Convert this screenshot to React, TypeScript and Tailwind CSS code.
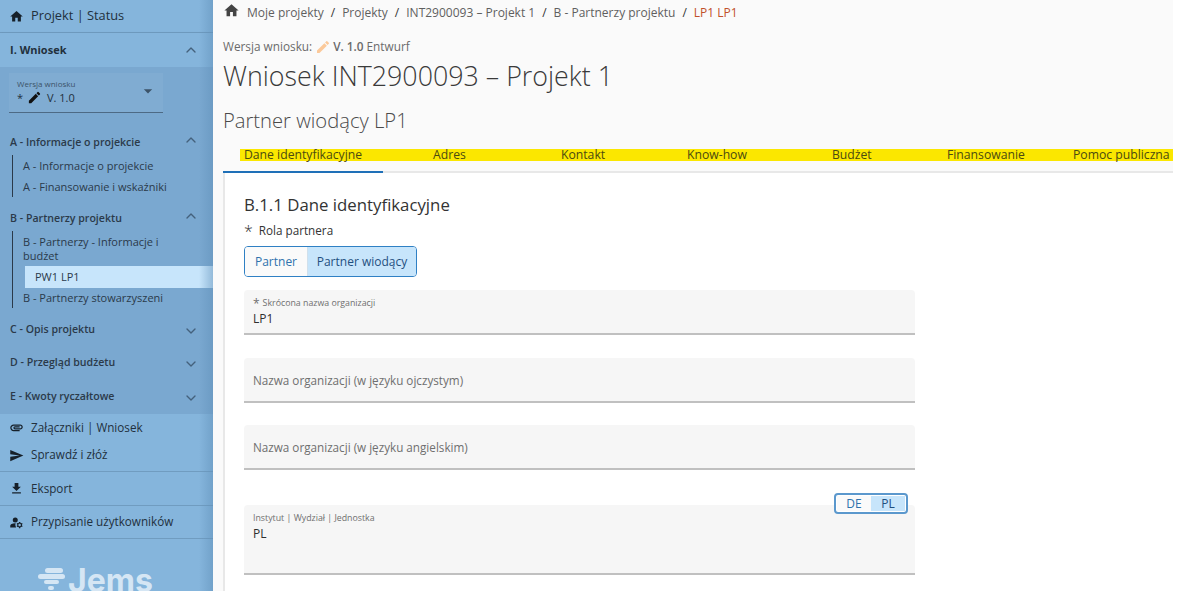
import { ChevronDown, ChevronUp } from 'lucide-react';
import {
  MdHome,
  MdEdit,
  MdArrowDropDown,
  MdAttachment,
  MdSend,
  MdFileDownload,
  MdManageAccounts,
} from 'react-icons/md';

const tabs = [
  { name: 'Dane identyfikacyjne', left: 'pl-[4px]', width: 'w-[193px]' },
  { name: 'Adres', left: 'pl-0', width: 'w-[128px]' },
  { name: 'Kontakt', left: 'pl-0', width: 'w-[126px]' },
  { name: 'Know-how', left: 'pl-0', width: 'w-[145px]' },
  { name: 'Budżet', left: 'pl-0', width: 'w-[115px]' },
  { name: 'Finansowanie', left: 'pl-0', width: 'w-[126px]' },
  { name: 'Pomoc publiczna', left: 'pl-0', width: 'w-[100px]' },
];

function NavGroup({
  title,
  open,
  children,
  className,
}: {
  title: string;
  open?: boolean;
  children?: React.ReactNode;
  className?: string;
}) {
  return (
    <div className={className}>
      <div className="flex h-[20px] items-center justify-between pl-[10px] pr-[14px]">
        <span className="pt-[2px] text-[10.6px] font-semibold text-[#2b3a4a]">{title}</span>
        {open ? (
          <ChevronUp className="-mt-[4px] h-[16px] w-[16px] text-[#44617c]" strokeWidth={2} />
        ) : (
          <ChevronDown className="mt-[4px] h-[16px] w-[16px] text-[#44617c]" strokeWidth={2} />
        )}
      </div>
      {children}
    </div>
  );
}

function BottomLink({
  icon,
  label,
  className,
}: {
  icon: React.ReactNode;
  label: string;
  className?: string;
}) {
  return (
    <div className={`flex shrink-0 items-center gap-[7px] pl-[9px] text-[#22303d] ${className}`}>
      <span className="flex w-[15px] justify-center text-[#16202a]">{icon}</span>
      {label}
    </div>
  );
}

function Field({
  label,
  value,
  required,
  className,
}: {
  label: string;
  value?: string;
  required?: boolean;
  className?: string;
}) {
  return (
    <div className={`w-[671px] rounded-t-[4px] border-b-2 border-[#c0c0c0] bg-[#f6f6f6] pl-[9px] ${className}`}>
      {value ? (
        <div className="pt-[8px]">
          <div className="flex h-[12px] items-center text-[8.8px] text-[#6f6f6f]">
            {required && <span className="mr-[3px] text-[12px] leading-none">*</span>}
            {label}
          </div>
          <div className="text-[12px] leading-[18px] text-[#2f2f2f]">{value}</div>
        </div>
      ) : (
        <div className="flex h-full items-center pt-[2px] text-[11.7px] text-[#6f6f6f]">{label}</div>
      )}
    </div>
  );
}

export default function App() {
  return (
    <div className="flex h-[591px] w-[1186px] overflow-hidden bg-white font-['Open_Sans',sans-serif]">
      {/* Sidebar */}
      <aside className="relative flex h-full w-[213px] shrink-0 flex-col overflow-hidden bg-[#85b5dc]">
        <div className="absolute inset-y-0 right-0 z-10 w-[14px] bg-gradient-to-r from-transparent to-[#5f8fb8]/50" />
        <BottomLink
          icon={<MdHome size={17} />}
          label="Projekt | Status"
          className="h-[33px] border-b border-[#709cc0] text-[12.8px]"
        />
        <div className="flex h-[34px] shrink-0 items-center justify-between pl-[10px] pr-[14px] shadow-[0_2px_3px_rgba(40,70,100,0.55)]">
          <span className="text-[11px] font-bold text-[#22303d]">I. Wniosek</span>
          <ChevronUp className="h-[16px] w-[16px] text-[#44617c]" strokeWidth={2} />
        </div>

        <div className="h-[347px] shrink-0 bg-[#7aa8d0] pt-[6px]">
          <div className="ml-[9px] flex h-[40px] w-[154px] justify-between border-b border-[#4d6a85] bg-[#80acd2] pl-[8px] pr-[5px]">
            <div>
              <div className="mt-[5px] text-[8px] leading-[12px] text-[#3c5368]">Wersja wniosku</div>
              <div className="flex items-center text-[11px] leading-[14px] text-[#22303d]">
                <span className="w-[10px]">*</span>
                <MdEdit size={15} className="text-[#111]" />
                <span className="ml-[5px]">V. 1.0</span>
              </div>
            </div>
            <MdArrowDropDown size={20} className="mt-[8px] text-[#3c5368]" />
          </div>

          <NavGroup title="A - Informacje o projekcie" open className="mt-[19px]">
            <div className="ml-[12px] mt-[3px] h-[42px] border-l border-[#2b3a4a] pl-[10px] text-[11px] leading-[21px] text-[#2b3a4a]">
              <div>A - Informacje o projekcie</div>
              <div>A - Finansowanie i wskaźniki</div>
            </div>
          </NavGroup>

          <NavGroup title="B - Partnerzy projektu" open className="mt-[11px]">
            <div className="ml-[12px] mt-[3px] border-l border-[#2b3a4a] text-[11px] text-[#2b3a4a]">
              <div className="w-[150px] pl-[10px] pt-[4px] leading-[14px]">B - Partnerzy - Informacje i budżet</div>
              <div className="ml-[12px] mt-[3px] h-[22px] bg-[#c7e5fb] pl-[10px] leading-[22px]">PW1 LP1</div>
              <div className="pl-[10px] leading-[20px]">B - Partnerzy stowarzyszeni</div>
            </div>
          </NavGroup>

          <NavGroup title="C - Opis projektu" className="mt-[11px]" />
          <NavGroup title="D - Przegląd budżetu" className="mt-[13px]" />
          <NavGroup title="E - Kwoty ryczałtowe" className="mt-[14px]" />
        </div>

        <BottomLink icon={<MdAttachment size={17} />} label="Załączniki | Wniosek" className="h-[27px] text-[11.7px]" />
        <BottomLink icon={<MdSend size={15} />} label="Sprawdź i złóż" className="h-[31px] border-b border-[#709cc0] pb-[2px] text-[11.7px]" />
        <BottomLink icon={<MdFileDownload size={17} />} label="Eksport" className="h-[34px] border-b border-[#709cc0] text-[11.7px]" />
        <BottomLink icon={<MdManageAccounts size={17} />} label="Przypisanie użytkowników" className="h-[33px] border-b border-[#709cc0] text-[11.7px]" />

        <div className="mt-[28px] flex shrink-0 items-start pl-[38px] text-[#d5e6f4]">
          <svg width="27" height="22" viewBox="0 0 27 22" fill="currentColor" className="mt-[1px]">
            <rect x="7" y="0" width="18" height="5" rx="2.5" />
            <rect x="0" y="6" width="27" height="5" rx="2.5" />
            <rect x="6" y="12" width="15" height="4" rx="2" />
            <rect x="10" y="18" width="6" height="4" rx="2" />
          </svg>
          <span className="ml-[3px] font-['Inter',sans-serif] text-[32px] font-bold leading-[28px]">Jems</span>
        </div>
      </aside>

      {/* Main content */}
      <main className="h-full w-[960px] shrink-0 overflow-hidden bg-[#fafafa] pl-[10px]">
        <nav className="flex h-[24px] items-center gap-[7px] pt-[1px] text-[12px] text-[#5f5f5f]">
          <MdHome size={17} className="-mt-[4px] text-[#444]" />
          <span>Moje projekty</span>
          <span className="text-[#333]">/</span>
          <span>Projekty</span>
          <span className="text-[#333]">/</span>
          <span>INT2900093 – Projekt 1</span>
          <span className="text-[#333]">/</span>
          <span>B - Partnerzy projektu</span>
          <span className="text-[#333]">/</span>
          <span className="text-[#c1502a]">LP1 LP1</span>
        </nav>

        <div className="mt-[15px] flex h-[16px] items-center text-[11.8px] text-[#6a6a6a]">
          Wersja wniosku:
          <MdEdit size={16} className="ml-[3px] mr-[2px] text-[#fbc99a]" />
          <b className="mr-[3px] font-semibold">V. 1.0</b> Entwurf
        </div>
        <h1 className="mt-[2px] text-[26.8px] font-light leading-[38px] text-[#3a3a3a]">Wniosek INT2900093 – Projekt 1</h1>
        <h2 className="mt-[11px] text-[20.2px] font-light leading-[28px] text-[#4a4a4a]">Partner wiodący LP1</h2>

        <div className="mt-[15px] flex h-[12px] items-center">
          <div className="ml-[17px] flex h-[12px] flex-1 items-center bg-[#fbe700] text-[12.2px] text-[#4b4a10]">
            {tabs.map((tab) => (
              <span key={tab.name} className={`${tab.width} ${tab.left} shrink-0 whitespace-nowrap`}>
                {tab.name}
              </span>
            ))}
          </div>
        </div>

        {/* Card */}
        <div className="relative mt-[10px] h-[430px] border-l-2 border-t-2 border-[#e8e8e8] bg-white pl-[19px]">
          <div className="absolute -left-[2px] -top-[2px] h-[2px] w-[160px] bg-[#1f70b8]" />
          <h3 className="mt-[20px] text-[16.8px] leading-[24px] text-[#333]">B.1.1 Dane identyfikacyjne</h3>
          <div className="mt-[4px] flex h-[20px] items-center text-[11.7px] text-[#333]">
            <span className="mr-[6px] text-[16px] font-light leading-none">*</span>
            Rola partnera
          </div>
          <div className="mt-[5px] flex h-[31px] w-[173px] overflow-hidden rounded-[4px] border border-[#2f80c4] text-[12px]">
            <div className="flex w-[62px] items-center justify-center bg-[#fafafa] text-[#2f72ad]">Partner</div>
            <div className="flex flex-1 items-center justify-center border-l border-[#d0e0ec] bg-[#c7e5fb] text-[#1f4f7f]">Partner wiodący</div>
          </div>

          <Field label="Skrócona nazwa organizacji" value="LP1" required className="mt-[13px] h-[45px]" />
          <Field label="Nazwa organizacji (w języku ojczystym)" className="mt-[23px] h-[45px]" />
          <Field label="Nazwa organizacji (w języku angielskim)" className="mt-[22px] h-[45px]" />

          <div className="relative mt-[35px] w-[671px]">
            <div className="absolute -top-[12px] right-[7px] z-10 flex h-[21px] w-[74px] items-center rounded-[4px] border-2 border-[#5b98cd] bg-white p-[1px] text-[12px]">
              <div className="flex h-full flex-1 items-center justify-center bg-[#fafafa] text-[#2f72ad]">DE</div>
              <div className="flex h-full flex-1 items-center justify-center bg-[#c7e5fb] text-[#1f4f7f]">PL</div>
            </div>
            <Field label="Instytut | Wydział | Jednostka" value="PL" className="h-[70px]" />
          </div>
        </div>
      </main>
    </div>
  );
}
